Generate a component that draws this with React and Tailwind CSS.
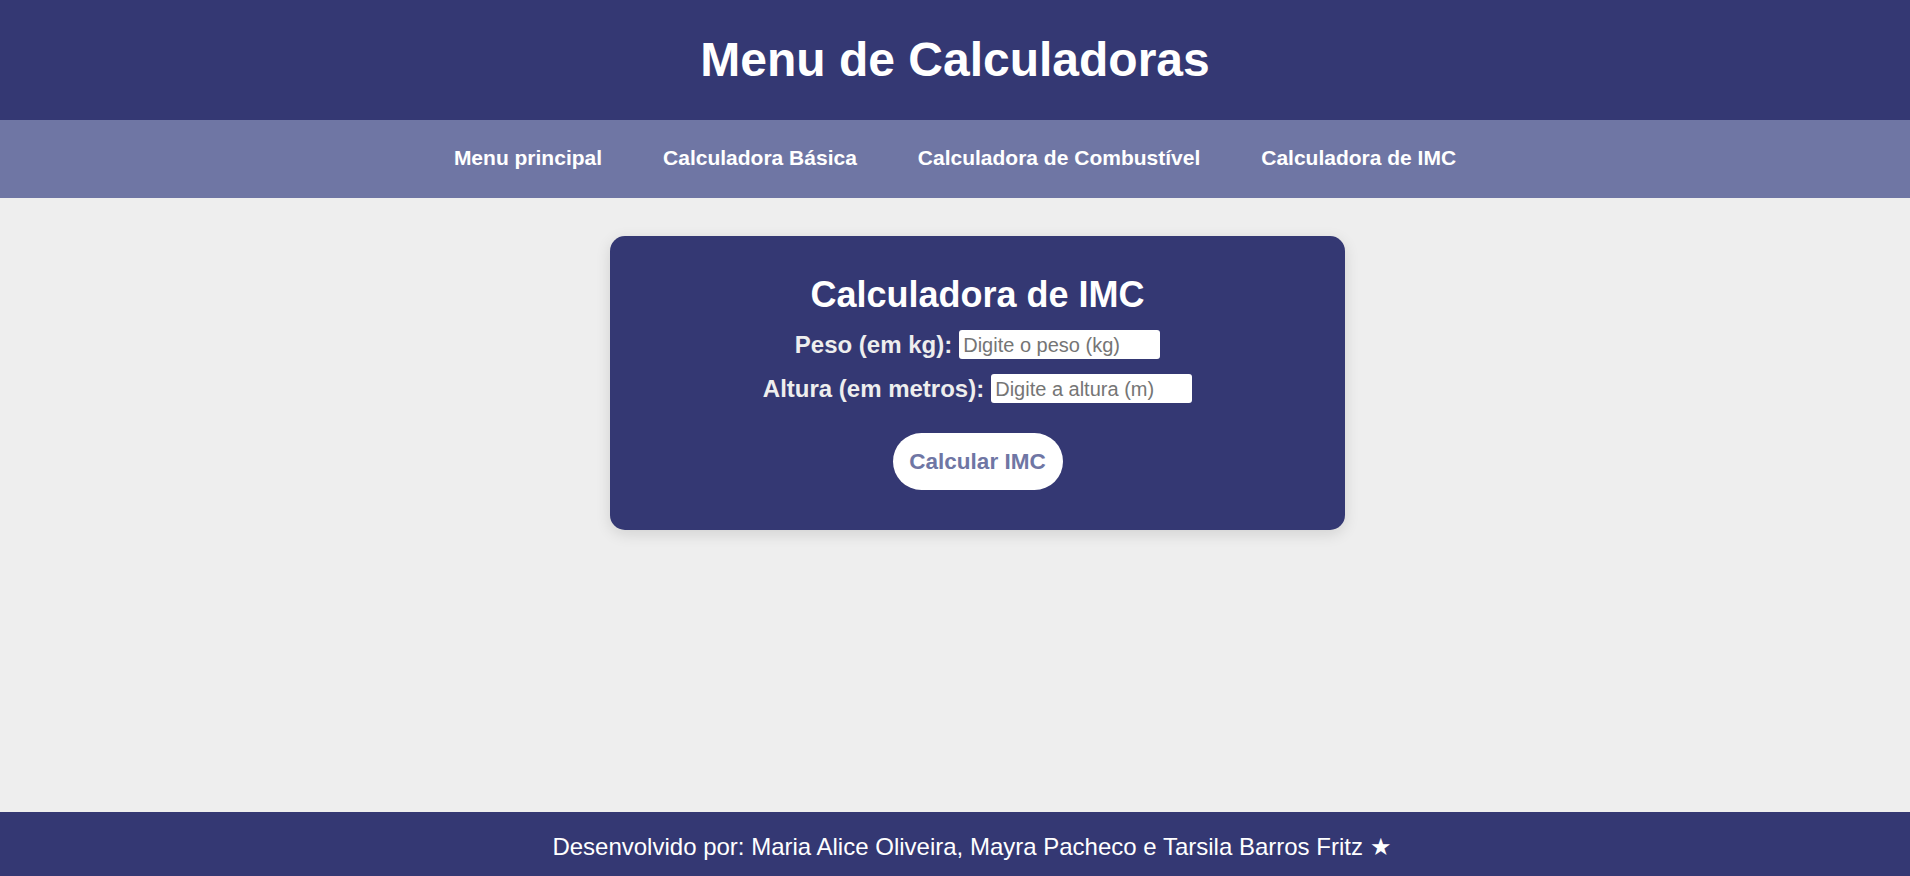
export default function App() {
  const links = ['Menu principal', 'Calculadora Básica', 'Calculadora de Combustível', 'Calculadora de IMC'];

  return (
    <div className="min-h-screen flex flex-col bg-[#eeeeee] font-['Liberation_Sans',Arial,sans-serif]">
      {/* Header */}
      <header className="h-[120px] bg-[#343873] flex justify-center pt-[32px]">
        <h1 className="text-[48px] leading-[55px] font-bold text-white">Menu de Calculadoras</h1>
      </header>

      {/* Nav */}
      <nav className="h-[78px] bg-[#6f76a4] flex justify-center gap-[61px] pt-[26px]">
        {links.map(link => (
          <a key={link} href="#" className="text-[21px] leading-[24px] font-bold text-white">
            {link}
          </a>
        ))}
      </nav>

      {/* Main */}
      <main className="flex-1 flex justify-center items-start pt-[38px] pl-[45px]">
        <div className="w-[735px] bg-[#343873] rounded-[15px] shadow-[0_4px_15px_rgba(0,0,0,0.12)] pt-[38px] pb-[40px] flex flex-col items-center">
          <h2 className="text-[36px] leading-[41px] font-bold text-white">Calculadora de IMC</h2>

          <div className="mt-[15px] flex items-center gap-[7px]">
            <label className="text-[24px] leading-[29px] font-bold text-[#eeeeee]">Peso (em kg):</label>
            <input
              type="number"
              placeholder="Digite o peso (kg)"
              className="w-[201px] h-[29px] bg-white rounded-[3px] px-[4px] text-[20px] text-black placeholder:text-[#757575] outline-none"
            />
          </div>

          <div className="mt-[15px] flex items-center gap-[7px]">
            <label className="text-[24px] leading-[29px] font-bold text-[#eeeeee]">Altura (em metros):</label>
            <input
              type="number"
              placeholder="Digite a altura (m)"
              className="w-[201px] h-[29px] bg-white rounded-[3px] px-[4px] text-[20px] text-black placeholder:text-[#757575] outline-none"
            />
          </div>

          <button className="mt-[30px] w-[170px] h-[57px] rounded-full bg-white flex items-center justify-center text-[22.5px] font-bold text-[#6f76a4]">
            Calcular IMC
          </button>
        </div>
      </main>

      {/* Footer */}
      <footer className="h-[64px] bg-[#343873] flex items-center justify-center pt-[6px] pl-[34px]">
        <p className="text-[24px] leading-[26px] text-white">
          Desenvolvido por: Maria Alice Oliveira, Mayra Pacheco e Tarsila Barros Fritz ★
        </p>
      </footer>
    </div>
  );
}
